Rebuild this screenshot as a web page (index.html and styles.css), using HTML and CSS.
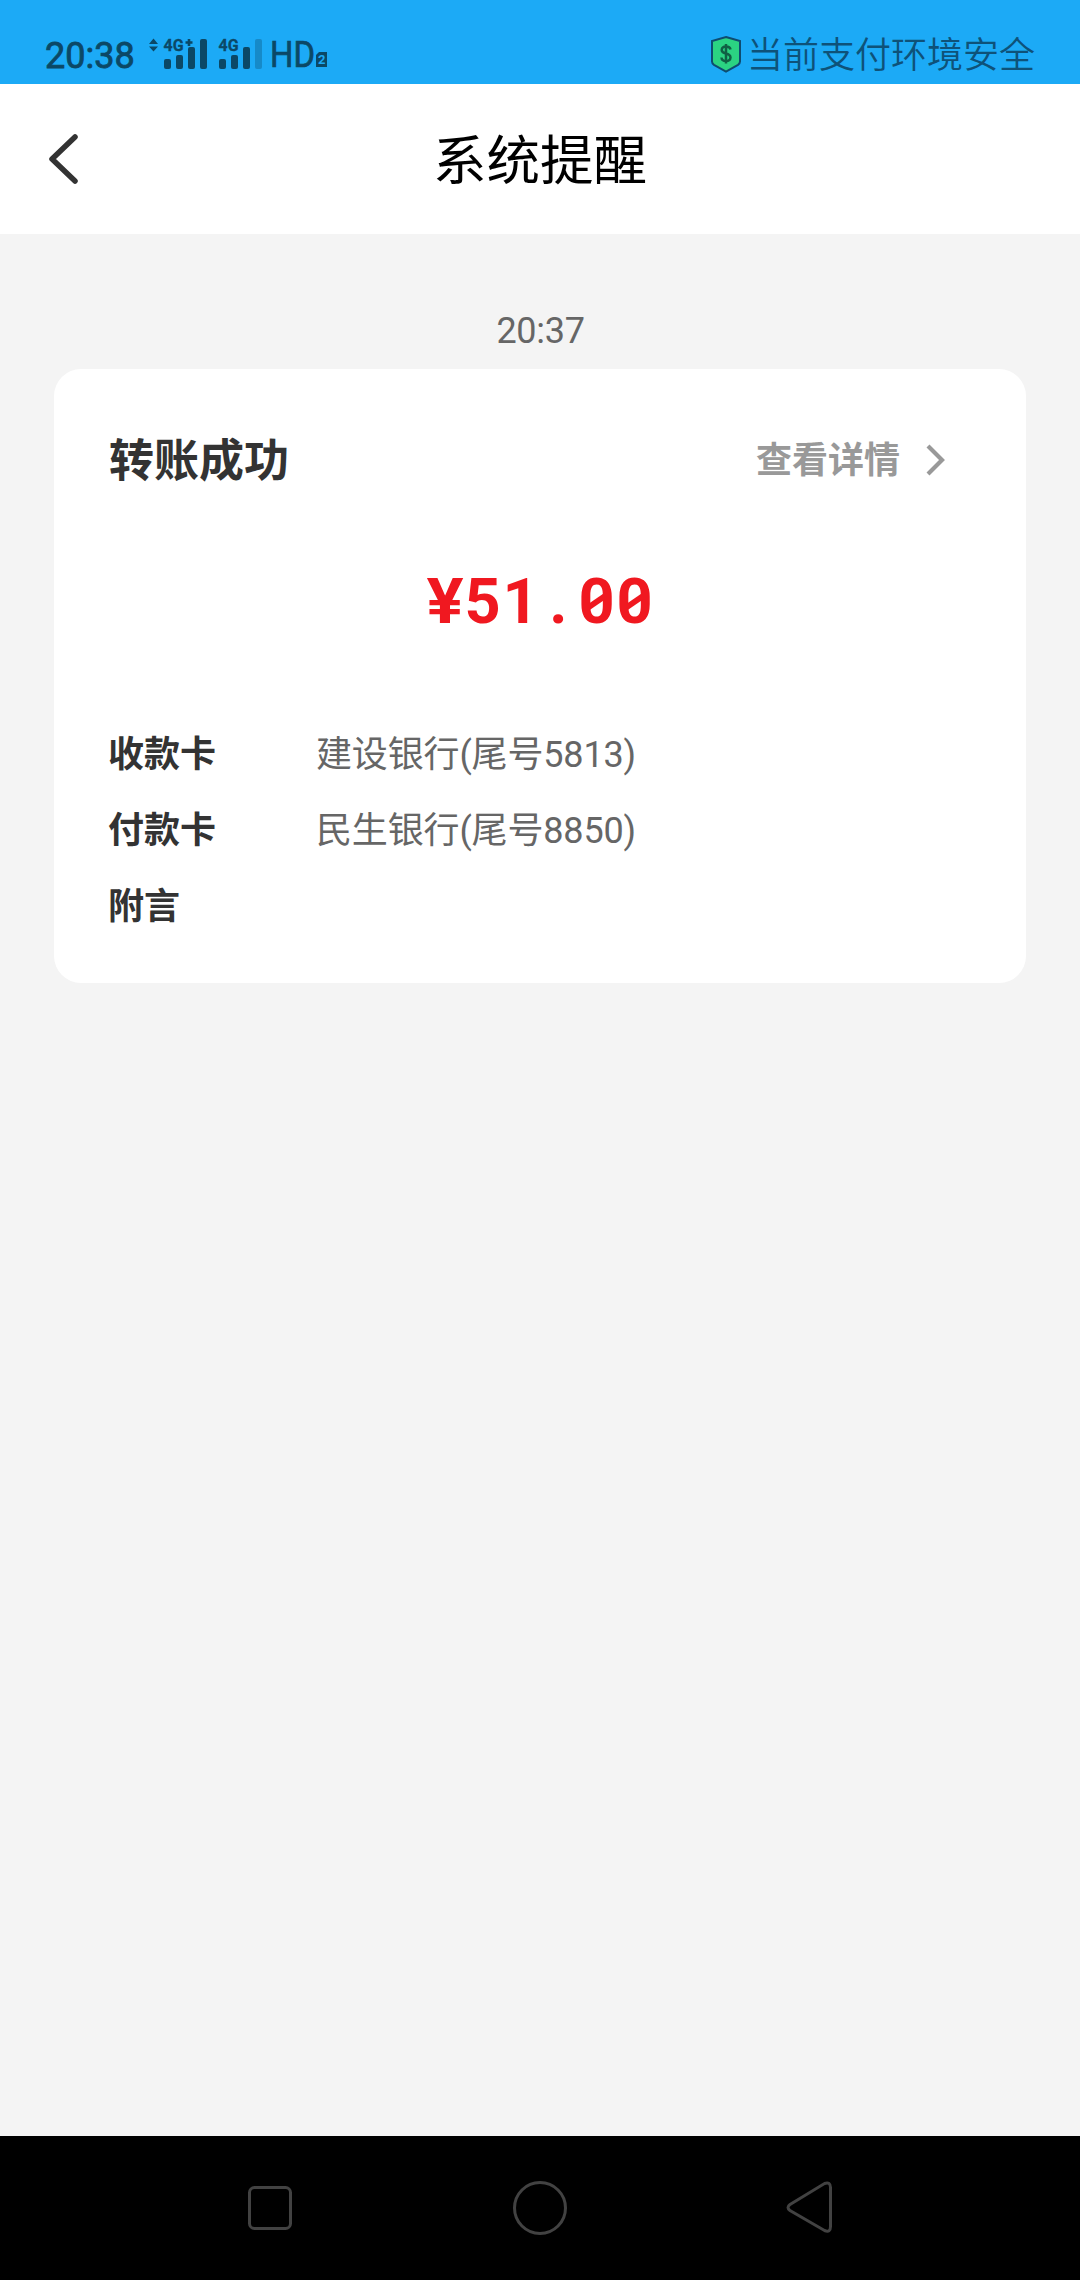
FILE: index.html
```html
<!DOCTYPE html>
<html lang="zh-CN">
<head>
<meta charset="utf-8">
<title>系统提醒</title>
<link rel="stylesheet" href="styles.css">
</head>
<body>
<div class="status">
  <span class="clock">20:38</span>
  <svg class="signals" width="184" height="50" viewBox="146 29 184 50">
    <path d="M149 44l4.500-5.500 4.500 5.500zM149 46.500h9l-4.500 5z"/>
    <text x="163.500" y="51" textLength="20" lengthAdjust="spacingAndGlyphs">4G</text>
    <path d="M187.700 39h2.600v2.200h2.200v2.600h-2.200v2.200h-2.600v-2.200h-2.200v-2.600h2.200z"/>
    <rect x="164" y="59" width="7" height="10" rx="2"/>
    <rect x="176" y="55" width="7" height="14" rx="2"/>
    <rect x="188" y="47" width="7" height="22" rx="2"/>
    <rect x="200" y="39" width="7" height="30" rx="2"/>
    <text x="218.500" y="51" textLength="20" lengthAdjust="spacingAndGlyphs">4G</text>
    <rect x="219" y="59" width="7" height="10" rx="2"/>
    <rect x="231" y="55" width="7" height="14" rx="2"/>
    <rect x="243" y="47" width="7" height="22" rx="2"/>
    <rect class="dim" x="255" y="39" width="7" height="30" rx="2"/>
    <text class="hd" x="270" y="67" textLength="45" lengthAdjust="spacingAndGlyphs">HD</text>
    <path d="M319 52h8v15h-11v-12z"/>
    <text class="sim" x="318" y="64">2</text>
  </svg>
  <div class="safe">
    <svg width="32" height="38" viewBox="0 0 32 38">
      <path d="M16 2L30 6V26.500Q30 28.500 28 29.800L16 36.500 4 29.800Q2 28.500 2 26.500V6Z" fill="#2bd382" stroke="#0e4c70" stroke-width="2"/>
      <path d="M20.500 14.500Q20 11.500 16 11.500T11.700 15Q11.700 17.500 16 18.500T20.500 22.500Q20.300 26 16 26T11.500 22.500M16 9v19.500" fill="none" stroke="#106044" stroke-width="2.500"/>
    </svg>
    <span>当前支付环境安全</span>
  </div>
</div>
<header class="header">
  <svg class="back" width="36" height="60" viewBox="0 0 36 60"><path d="M30 8L7 30 30 52" fill="none" stroke="#333" stroke-width="5.500" stroke-linecap="round" stroke-linejoin="round"/></svg>
  <h1>系统提醒</h1>
</header>
<main class="content">
  <div class="time">20:37</div>
  <section class="card">
    <div class="card-head">
      <h2>转账成功</h2>
      <a class="more"><span>查看详情</span><svg width="24" height="36" viewBox="0 0 24 36"><path d="M4 4L18 18 4 32" fill="none" stroke="#999" stroke-width="4.200"/></svg></a>
    </div>
    <div class="amount"><span class="yen">¥</span><span>5</span><span>1</span><span>.</span><span class="zero">0</span><span class="zero">0</span></div>
    <dl class="details">
      <dt>收款卡</dt><dd>建设银行(尾号5813)</dd>
      <dt>付款卡</dt><dd>民生银行(尾号8850)</dd>
      <dt>附言</dt><dd></dd>
    </dl>
  </section>
</main>
<nav class="navbar">
  <svg width="60" height="60" viewBox="0 0 60 60"><rect x="9.500" y="9.500" width="41" height="41" rx="5"/></svg>
  <svg width="60" height="60" viewBox="0 0 60 60"><circle cx="30" cy="30" r="25.500"/></svg>
  <svg width="60" height="60" viewBox="0 0 60 60"><path d="M10 26.500L44.500 5.500Q50.500 3.500 50.500 9.500V48.500Q50.500 55 44.500 52.500L10 32.500Q6 29.500 10 26.500Z"/></svg>
</nav>
</body>
</html>
```
FILE: styles.css
```css
* { box-sizing: border-box; }
body {
  margin: 0;
  width: 1080px;
  height: 2280px;
  display: flex;
  flex-direction: column;
  background: #f4f4f4;
  font-family: Roboto, "Noto Sans CJK SC", sans-serif;
  color: #333;
}
h1, h2, dl, dt, dd { margin: 0; }
svg { display: block; flex: none; }

.status {
  height: 84px;
  padding: 24px 45px 0 45px;
  display: flex;
  align-items: flex-start;
  background: #1caaf6;
  color: #0b4866;
  font-size: 36px;
  line-height: 60px;
}
.clock { width: 101px; margin-top: 2px; -webkit-text-stroke: .8px #0b4866; }
.signals { margin-top: 5px; fill: #0b4866; overflow: visible; }
.signals text { font: 700 17px Roboto, sans-serif; stroke: #0b4866; stroke-width: .3; }
.signals .dim { fill: #168ac8; }
.signals .hd { font-size: 36px; font-weight: 400; stroke-width: .7; }
.signals .sim { font-size: 13px; fill: #1caaf6; stroke: none; }
.safe { margin-left: auto; display: flex; align-items: flex-start; gap: 5px; color: #0e5279; font-weight: 350; }
.safe svg { margin-top: 11px; }
.safe span { padding-top: 2px; font-family: "Noto Sans CJK SC DemiLight", "Noto Sans CJK SC", sans-serif; line-height: 52px; }

.header {
  height: 150px;
  padding: 0 45px;
  display: grid;
  grid-template-columns: 36px 1fr 36px;
  align-items: center;
  background: #fff;
}
.header h1 { padding-top: 6px; font-size: 53.500px; line-height: 80px; font-weight: 400; text-align: center; color: #000; }

.content { flex: 1; padding: 71px 54px 0; }
.time { height: 64px; line-height: 52px; text-align: center; font-size: 36px; letter-spacing: -.3px; padding-left: 1px; color: #666; }
.card { height: 614px; padding: 54px 54px 0; border-radius: 27px; background: #fff; }
.card-head { height: 74px; display: flex; align-items: center; justify-content: space-between; }
.card-head h2 { padding: 3px 0 0 1px; font-size: 45px; line-height: 74px; font-weight: 700; }
.more { display: flex; align-items: center; gap: 24px; margin: -1px 24px 0 0; font-size: 36px; line-height: 48px; font-weight: 700; color: #999; }
.more span { padding-top: 3px; }
.amount {
  margin: 65px 1px 0 0;
  height: 80px;
  display: flex;
  justify-content: center;
  font-size: 63px;
  line-height: 80px;
  font-weight: 700;
  color: #f01820;
}
.amount span { width: 38px; display: flex; justify-content: center; }
.amount .yen { transform: scaleX(1.1); }
.zero { position: relative; }
.zero::after {
  content: "";
  position: absolute;
  left: 11px;
  top: 36px;
  width: 16px;
  height: 7px;
  background: currentColor;
  transform: skewY(-34deg);
}
.details {
  margin: 75px 0 0;
  display: grid;
  grid-template-columns: 208px 1fr;
  grid-auto-rows: 76px;
  font-size: 36px;
  line-height: 76px;
}
.details dt { font-weight: 700; }
.details dd { color: #666; letter-spacing: -.15px; }

.navbar {
  height: 144px;
  padding: 0 240px;
  display: flex;
  align-items: center;
  justify-content: space-between;
  background: #000;
}
.navbar svg { fill: none; stroke: #424242; stroke-width: 3; }
```
